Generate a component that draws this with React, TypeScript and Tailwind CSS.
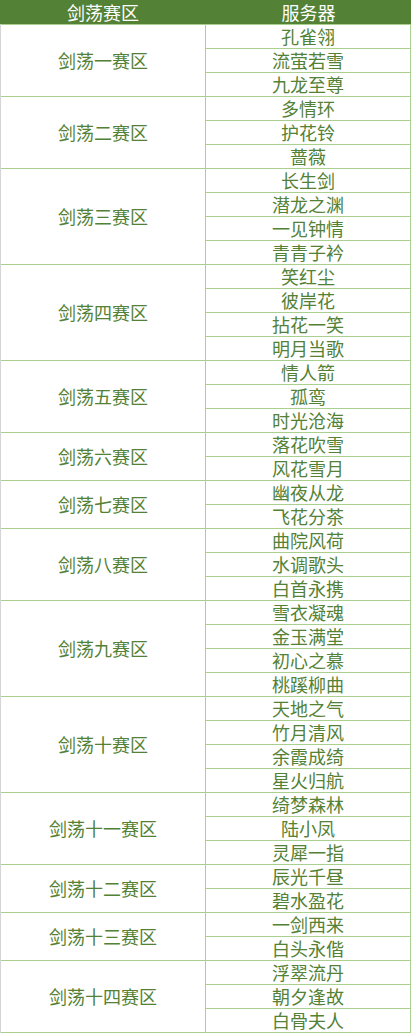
import React from "react";

const groups: { name: string; servers: string[] }[] = [
  { name: "剑荡一赛区", servers: ["孔雀翎", "流萤若雪", "九龙至尊"] },
  { name: "剑荡二赛区", servers: ["多情环", "护花铃", "蔷薇"] },
  { name: "剑荡三赛区", servers: ["长生剑", "潜龙之渊", "一见钟情", "青青子衿"] },
  { name: "剑荡四赛区", servers: ["笑红尘", "彼岸花", "拈花一笑", "明月当歌"] },
  { name: "剑荡五赛区", servers: ["情人箭", "孤鸾", "时光沧海"] },
  { name: "剑荡六赛区", servers: ["落花吹雪", "风花雪月"] },
  { name: "剑荡七赛区", servers: ["幽夜从龙", "飞花分茶"] },
  { name: "剑荡八赛区", servers: ["曲院风荷", "水调歌头", "白首永携"] },
  { name: "剑荡九赛区", servers: ["雪衣凝魂", "金玉满堂", "初心之慕", "桃蹊柳曲"] },
  { name: "剑荡十赛区", servers: ["天地之气", "竹月清风", "余霞成绮", "星火归航"] },
  { name: "剑荡十一赛区", servers: ["绮梦森林", "陆小凤", "灵犀一指"] },
  { name: "剑荡十二赛区", servers: ["辰光千昼", "碧水盈花"] },
  { name: "剑荡十三赛区", servers: ["一剑西来", "白头永偕"] },
  { name: "剑荡十四赛区", servers: ["浮翠流丹", "朝夕逢故", "白骨夫人"] },
];

export default function App() {
  return (
    <div
      className="w-[411px] bg-white text-[18px] leading-[23px]"
      style={{ fontFamily: '"Noto Sans CJK SC", "Microsoft YaHei", sans-serif' }}
    >
      <div className="flex h-[24px] bg-[#538135] text-white">
        <div className="flex w-[206px] items-center justify-center">剑荡赛区</div>
        <div className="flex flex-1 items-center justify-center">服务器</div>
      </div>
      <div className="border-l border-l-[#d4d4d4] text-[#538135]">
        {groups.map((g) => (
          <div key={g.name} className="flex border-t border-t-[#a9d08e] border-r border-r-[#a9d08e]">
            <div className="flex w-[205px] items-center justify-center border-r border-r-[#a9d08e]">
              {g.name}
            </div>
            <div className="flex flex-1 flex-col">
              {g.servers.map((s, i) => (
                <div
                  key={s}
                  className={
                    "flex h-[23px] items-center justify-center" +
                    (i > 0 ? " h-[24px] border-t border-t-[#a9d08e]" : "")
                  }
                >
                  {s}
                </div>
              ))}
            </div>
          </div>
        ))}
        <div className="border-t border-t-[#a9d08e]" />
      </div>
    </div>
  );
}
